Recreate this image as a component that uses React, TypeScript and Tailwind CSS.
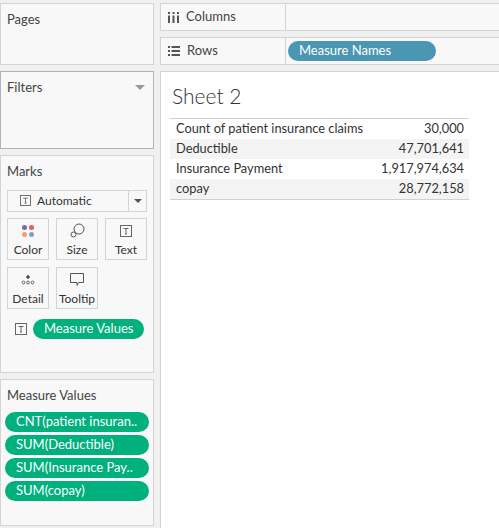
import React from "react";

const font = { fontFamily: "Lato, 'Noto Sans', sans-serif" };

const TIcon = ({ className = "" }: { className?: string }) => (
  <svg viewBox="0 0 12 12" className={className} fill="none" stroke="#666" strokeWidth="1">
    <rect x="0.5" y="0.5" width="11" height="11" />
    <path d="M3.5 3.5h5M6 3.5v5.5M5 9h2" />
  </svg>
);

const Panel = ({
  title,
  className = "",
  border = "border-[#d4d4d4]",
  children,
  caret,
}: {
  title: string;
  className?: string;
  border?: string;
  children?: React.ReactNode;
  caret?: boolean;
}) => (
  <div className={`border ${border} bg-[#f8f8f8] ${className}`}>
    <div className="flex items-center justify-between pl-[6px] pr-[8px] pt-[6px] text-[13px] text-[#444]">
      <span>{title}</span>
      {caret && <span className="h-0 w-0 border-x-[5px] border-t-[5px] border-x-transparent border-t-[#999]" />}
    </div>
    {children}
  </div>
);

const MarkButton = ({ label, icon }: { label: string; icon: React.ReactNode }) => (
  <div className="flex h-[42px] w-[42px] flex-col items-center justify-between border border-[#d4d4d4] bg-[#f8f8f8] pt-[4px] pb-[3px]">
    <div className="flex h-[16px] items-center">{icon}</div>
    <span className="text-[12px] leading-none text-[#333]">{label}</span>
  </div>
);

const GreenPill = ({ text, className = "" }: { text: string; className?: string }) => (
  <div className={`flex h-[20px] items-center rounded-full bg-[#00b07d] pl-[11px] text-[13px] text-white ${className}`}>
    {text}
  </div>
);

const rows = [
  ["Count of patient insurance claims", "30,000"],
  ["Deductible", "47,701,641"],
  ["Insurance Payment", "1,917,974,634"],
  ["copay", "28,772,158"],
];

export default function App() {
  return (
    <div className="flex h-[528px] w-[499px] overflow-hidden bg-[#f0f0f0]" style={font}>
      {/* left cards */}
      <div className="flex w-[154px] shrink-0 flex-col gap-[6px] pt-[3px]">
        <Panel title="Pages" className="h-[62px]" />
        <Panel title="Filters" className="h-[78px]" border="border-[#b4b4b4]" caret />
        <Panel title="Marks" className="h-[218px]">
          <div className="px-[6px] pt-[8px]">
            <div className="flex h-[22px] items-center border border-[#d4d4d4] bg-[#f8f8f8]">
              <div className="flex flex-1 items-center gap-[6px] pl-[12px] text-[12px] text-[#333]">
                <TIcon className="h-[11px] w-[11px]" />
                <span>Automatic</span>
              </div>
              <div className="flex h-full w-[18px] items-center justify-center border-l border-[#d4d4d4]">
                <span className="h-0 w-0 border-x-[4px] border-t-[4px] border-x-transparent border-t-[#555]" />
              </div>
            </div>
            <div className="mt-[6px] grid grid-cols-[42px_42px_42px] gap-[7px]">
              <MarkButton
                label="Color"
                icon={
                  <svg width="14" height="14" viewBox="0 0 14 14">
                    <circle cx="3.5" cy="3.5" r="2.5" fill="#7a6b9a" />
                    <circle cx="10.5" cy="3.5" r="2.5" fill="#e05e6a" />
                    <circle cx="3.5" cy="10.5" r="2.5" fill="#f0a070" />
                    <circle cx="10.5" cy="10.5" r="2.5" fill="#7f9fd0" />
                  </svg>
                }
              />
              <MarkButton
                label="Size"
                icon={
                  <svg width="15" height="15" viewBox="0 0 15 15" fill="none" stroke="#555" strokeWidth="1">
                    <circle cx="9" cy="6" r="5" />
                    <circle cx="3.5" cy="11.5" r="2.5" fill="#f8f8f8" />
                  </svg>
                }
              />
              <MarkButton label="Text" icon={<TIcon className="h-[12px] w-[12px]" />} />
              <MarkButton
                label="Detail"
                icon={
                  <svg width="14" height="10" viewBox="0 0 14 10" fill="none" stroke="#555" strokeWidth="0.9">
                    <circle cx="7" cy="2" r="1.4" fill="#555" />
                    <circle cx="2.5" cy="7.5" r="1.4" />
                    <circle cx="7" cy="7.5" r="1.4" />
                    <circle cx="11.5" cy="7.5" r="1.4" />
                  </svg>
                }
              />
              <MarkButton
                label="Tooltip"
                icon={
                  <svg width="14" height="14" viewBox="0 0 14 14" fill="none" stroke="#555" strokeWidth="1">
                    <path d="M0.5 0.5h13v9h-5l-1.5 3v-3h-6.5z" />
                  </svg>
                }
              />
            </div>
            <div className="mt-[10px] flex items-center gap-[6px] pl-[8px]">
              <TIcon className="h-[12px] w-[12px]" />
              <GreenPill text="Measure Values" className="w-[111px]" />
            </div>
          </div>
        </Panel>
        <Panel title="Measure Values" className="h-[147px]">
          <div className="flex flex-col gap-[3px] px-[4px] pt-[6px]">
            <GreenPill text="CNT(patient insuran.." />
            <GreenPill text="SUM(Deductible)" />
            <GreenPill text="SUM(Insurance Pay.." />
            <GreenPill text="SUM(copay)" />
          </div>
        </Panel>
      </div>

      {/* right side */}
      <div className="ml-[6px] flex w-[360px] shrink-0 flex-col gap-[6px] pt-[3px]">
        <div className="flex h-[28px] border border-[#d4d4d4] bg-[#f8f8f8]">
          <div className="flex w-[125px] items-center gap-[7px] border-r border-[#d4d4d4] pl-[7px] text-[13px] text-[#444]">
            <svg width="11" height="11" viewBox="0 0 11 11" fill="#555">
              <rect x="0" y="0" width="2" height="2" />
              <rect x="4.5" y="0" width="2" height="2" />
              <rect x="9" y="0" width="2" height="2" />
              <rect x="0" y="3.5" width="2" height="7.5" />
              <rect x="4.5" y="3.5" width="2" height="7.5" />
              <rect x="9" y="3.5" width="2" height="7.5" />
            </svg>
            <span>Columns</span>
          </div>
        </div>
        <div className="flex h-[28px] border border-[#d4d4d4] bg-[#f8f8f8]">
          <div className="flex w-[125px] items-center gap-[7px] border-r border-[#d4d4d4] pl-[7px] text-[13px] text-[#444]">
            <svg width="12" height="10" viewBox="0 0 12 10" fill="#555">
              <rect x="0" y="0" width="2" height="2" />
              <rect x="3.5" y="0" width="8.5" height="2" />
              <rect x="0" y="4" width="2" height="2" />
              <rect x="3.5" y="4" width="8.5" height="2" />
              <rect x="0" y="8" width="2" height="2" />
              <rect x="3.5" y="8" width="8.5" height="2" />
            </svg>
            <span>Rows</span>
          </div>
          <div className="flex items-center pl-[2px]">
            <div className="flex h-[20px] w-[148px] items-center rounded-full bg-[#4a96b3] pl-[11px] text-[13px] text-white">
              Measure Names
            </div>
          </div>
        </div>
        <div className="flex-1 border-l border-t border-[#d4d4d4] bg-white pl-[9px] pt-[13px]">
          <div className="pl-[2px] text-[21px] font-light leading-none text-[#333]">Sheet 2</div>
          <div className="mt-[12px] w-[299px] border-y border-[#d0d0d0] text-[12.8px] text-[#333]">
            {rows.map(([k, v], i) => (
              <div
                key={k}
                className={`flex h-[20px] items-center justify-between pl-[6px] pr-[5px] ${i % 2 ? "bg-[#f4f4f4]" : "bg-white"}`}
              >
                <span>{k}</span>
                <span>{v}</span>
              </div>
            ))}
          </div>
        </div>
      </div>
    </div>
  );
}
